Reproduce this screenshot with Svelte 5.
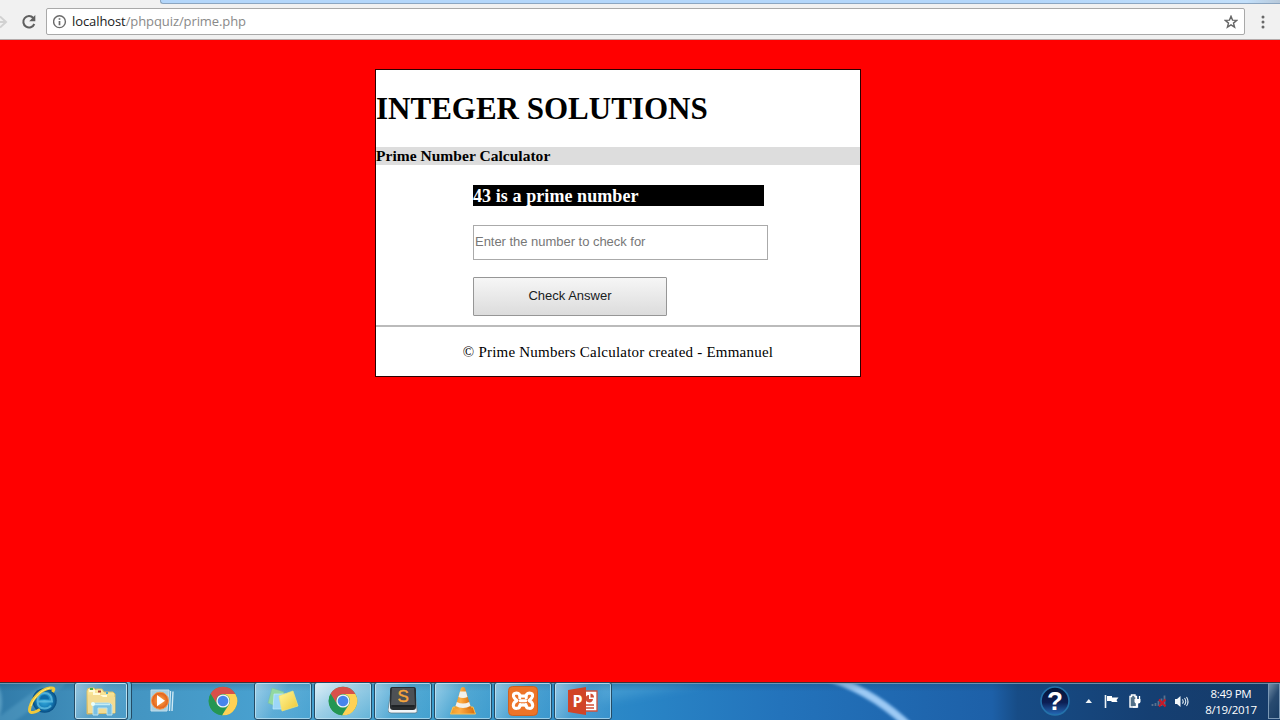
<script>
  const apps = ['ie', 'folder', 'media', 'chrome', 'notes', 'chrome', 'sublime', 'vlc', 'xampp', 'powerpoint'];
  const open = [1, 4, 5, 6, 7, 8, 9];
  let number = $state('');
</script>

<div class="screen">
  <header>
    <div class="tabs"></div>
    <div class="tools">
      <svg class="forward" width="12" height="20" viewBox="0 0 12 20"><path d="M0 10H6M1 4.500L7 10L1 15.500" fill="none" stroke="#d1d1d1" stroke-width="2" /></svg>
      <svg class="reload" width="16" height="16" viewBox="0 0 16 16">
        <path d="M12.300 4A5.700 5.700 0 1 0 13.300 10" fill="none" stroke="#5f5f5f" stroke-width="2" />
        <path d="M14.300 1V7.200H8.200Z" fill="#5f5f5f" />
      </svg>
      <div class="address">
        <svg width="14" height="14" viewBox="0 0 14 14"><circle cx="6.500" cy="6.700" r="5.900" fill="none" stroke="#6a6a6a" stroke-width="1.400" /><path d="M6.500 6V10.200M6.500 3.200V4.800" stroke="#6a6a6a" stroke-width="1.700" /></svg>
        <span class="url">localhost<i>/phpquiz/prime.php</i></span>
        <svg class="star" width="14" height="14" viewBox="0 0 14 14"><path d="M7 1.300L8.500 5.100L12.700 5.400L9.500 8.100L10.600 12.200L7 9.900L3.400 12.200L4.500 8.100L1.300 5.400L5.500 5.100Z" fill="none" stroke="#666" stroke-width="1.400" /></svg>
      </div>
      <svg class="dots" width="4" height="14" viewBox="0 0 4 14"><g fill="#686868"><circle cx="2" cy="2" r="1.500" /><circle cx="2" cy="7" r="1.500" /><circle cx="2" cy="12" r="1.500" /></g></svg>
    </div>
  </header>

  <main>
    <section class="card">
      <h1><span>INTEGER SOLUTIONS</span></h1>
      <h4><span>Prime Number Calculator</span></h4>
      <div class="form">
        <div class="result"><span>43 is a prime number</span></div>
        <input bind:value={number} placeholder="Enter the number to check for" />
        <button>Check Answer</button>
      </div>
      <footer><span>© Prime Numbers Calculator created - Emmanuel</span></footer>
    </section>
  </main>

  <nav>
    <svg class="wallpaper" width="1280" height="38" viewBox="0 0 1280 38" preserveAspectRatio="none">
      <defs>
        <linearGradient id="sky"><stop offset="0" stop-color="#317ba9" /><stop offset=".07" stop-color="#4291bd" /><stop offset=".2" stop-color="#48a0cf" /><stop offset=".35" stop-color="#399bcb" /><stop offset=".5" stop-color="#2985c6" /><stop offset=".61" stop-color="#2373bb" /><stop offset=".775" stop-color="#1d60a8" /><stop offset=".795" stop-color="#174c86" /><stop offset=".9" stop-color="#153f72" /><stop offset="1" stop-color="#163b68" /></linearGradient>
        <linearGradient id="topShade" x2="0" y2="1"><stop offset="0" stop-color="#173956" stop-opacity=".25" /><stop offset=".25" stop-color="#173956" stop-opacity="0" /></linearGradient>
        <filter id="soft" x="-20%" y="-20%" width="140%" height="140%"><feGaussianBlur stdDeviation="1.800" /></filter>
        <filter id="wide" x="-50%" y="-50%" width="200%" height="200%"><feGaussianBlur stdDeviation="5" /></filter>
      </defs>
      <rect width="1280" height="38" fill="url(#sky)" />
      <path d="M600 20L710 0H600Z" fill="#65b5df" opacity=".35" filter="url(#wide)" />
      <path d="M0 42L62 -3" stroke="#6fb5d6" stroke-width="13" opacity=".3" filter="url(#soft)" />
      <ellipse cx="-5" cy="20" rx="7" ry="18" fill="#7fbcd8" opacity=".5" filter="url(#soft)" />
      <path d="M820 -7Q870 6 911 46" fill="none" stroke="#79b9f2" stroke-width="9" opacity=".3" filter="url(#soft)" />
      <path d="M820 -7Q870 6 911 46" fill="none" stroke="#9dcaf5" stroke-width="7" filter="url(#soft)" />
      <rect width="1280" height="38" fill="url(#topShade)" />
      <rect width="1280" height="1" fill="#35343d" /><rect y="1" width="1280" height="1" fill="#86a5bd" opacity=".75" />
    </svg>

    <div class="apps">
      {#each apps as app, index}
        <div class="app" class:open={open.includes(index)} class:active={index === 5} class:stack={index === 1}>
          {#if app === 'ie'}
            <svg width="34" height="32" viewBox="0 0 34 32">
              <defs><radialGradient id="ieBlue"><stop offset="0" stop-color="#3aaede" /><stop offset=".6" stop-color="#167fbb" /><stop offset="1" stop-color="#074c82" /></radialGradient></defs>
              <circle cx="18.500" cy="15.500" r="12.200" fill="url(#ieBlue)" />
              <path d="M14 14.500Q14 10 18.500 10Q23 10 23 14.500Z" fill="#0d6aa8" />
              <path d="M12 16.500H26Q26 8 18.500 8Q11.500 8 11.500 16Q11.500 23.500 18.500 23.500Q23 23.500 25 20.500" fill="none" stroke="#62bde0" stroke-width="2" opacity=".8" />
              <path d="M26.500 7C29 3.500 28 2.500 24 3C15 4 6 14 4 22C2 29 6 29 14 24.500" fill="none" stroke="#efc83b" stroke-width="3" />
              <path d="M24 3C15 5 8 12 5 21" fill="none" stroke="#ffec7c" stroke-width="1" />
            </svg>
          {:else if app === 'folder'}
            <svg width="34" height="30" viewBox="0 0 34 30">
              <defs><linearGradient id="paper" x2="0" y2="1"><stop stop-color="#fff0a5" /><stop offset="1" stop-color="#dfb65a" /></linearGradient></defs>
              <path d="M3 28V5Q3 2 6 2H10L12 4V3H18L20 6H29L31 8V27Z" fill="url(#paper)" stroke="#d9bd67" />
              <path d="M5 5H10V8H15V10H22V12H30" fill="none" stroke="#fffbd9" stroke-width="2" />
              <path d="M6 2H9V4H6Z" fill="#46a840" /><path d="M14 4.500H17V6.500H14Z" fill="#b14b38" /><path d="M22 6H24V8H22Z" fill="#4caacf" />
              <path d="M4 9H16L19 11H31V27H4Z" fill="#f4dc92" />
              <path d="M9 29V19Q9 17 12 17H24Q27 17 28 19V29H23V22H14V29Z" fill="#7ac0e3" stroke="#b9e2ef" /><path d="M10 18.500H26" stroke="#c6edf5" stroke-width="1.500" />
              <circle cx="9" cy="18" r="2" fill="#e7ffff" />
            </svg>
          {:else if app === 'media'}
            <svg width="28" height="26" viewBox="0 0 28 26"><defs><radialGradient id="orange"><stop stop-color="#ffb14c" /><stop offset="1" stop-color="#df5b1a" /></radialGradient></defs><path d="M2 2H20L18 23H2Z" fill="#b5d9e9" opacity=".85" stroke="#dcecf2" /><path d="M21.500 3L20.500 23M24 3.500L23 23" stroke="#cfe9f5" stroke-width="1.400" /><circle cx="11" cy="12.700" r="8.500" fill="url(#orange)" stroke="#f69a49" /><path d="M8 7L16 12.700L8 18.300Z" fill="#fff" /></svg>
          {:else if app === 'chrome'}
            <svg width="30" height="30" viewBox="0 0 30 30">
              <circle cx="15" cy="15" r="14.300" fill="#35a35a" />
              <path d="M2.600 7.800A14.300 14.300 0 0 1 27.400 8H15A7 7 0 0 0 8.800 18Z" fill="#d9504a" />
              <path d="M27.400 8A14.300 14.300 0 0 1 14 29.300L21 18.500A7 7 0 0 0 15 8Z" fill="#ffd155" />
              <path d="M2.600 7.800L9 18.500A7 7 0 0 0 18 21L14 29.300A14.300 14.300 0 0 1 2.600 7.800" fill="#249653" />
              <circle cx="15" cy="15" r="6.600" fill="#f1f6f8" /><circle cx="15" cy="15" r="5.300" fill="#4785ed" />
            </svg>
          {:else if app === 'notes'}
            <svg width="34" height="28" viewBox="0 0 34 28"><defs><linearGradient id="note" x2="1" y2="1"><stop stop-color="#fff69a" /><stop offset="1" stop-color="#efc735" /></linearGradient></defs><path d="M6 1L18 5L14 21L2 16Z" fill="#93d9a1" stroke="#78bd9b" stroke-width=".5" /><path d="M8 7L20 7L19 22L7 22Z" fill="#9cd6f8" stroke="#c2ecff" stroke-width=".7" /><path d="M13 9L27 4L32 19L16 24Z" fill="url(#note)" stroke="#eee477" stroke-width=".7" /></svg>
          {:else if app === 'sublime'}
            <svg width="30" height="30" viewBox="0 0 30 30"><path d="M3 5L0 24Q0 27 3 27H27Q30 27 29 24L27 5Z" fill="#f1f5f8" stroke="#56717d" stroke-width=".7" /><path d="M4 1H26Q28 1 28 4V21Q28 24 25 24H5Q2 24 2 21V4Q2 1 4 1Z" fill="#292d30" /><path d="M4 2H26L27 19H3Z" fill="#4d5155" /><path d="M4 20H26" stroke="#1f2326" stroke-width="2" /><text x="9.500" y="16" class="s">S</text></svg>
          {:else if app === 'vlc'}
            <svg width="28" height="30" viewBox="0 0 28 30"><defs><linearGradient id="cone"><stop stop-color="#eb9a25" /><stop offset=".35" stop-color="#ffad45" /><stop offset="1" stop-color="#d66b0a" /></linearGradient></defs><path d="M4 21H24L26.500 28H1.500Z" fill="url(#cone)" stroke="#f7c154" /><path d="M12 2Q14 0 16 2L22 22Q14 27 6 22Z" fill="url(#cone)" /><path d="M11 5.500H17L18.500 11Q14 13 9.500 11ZM7.800 16L6.500 20Q14 24 21.500 20L20.200 16Q14 19 7.800 16Z" fill="#f2f1ec" /></svg>
          {:else if app === 'xampp'}
            <svg width="30" height="30" viewBox="0 0 30 30"><rect x=".5" y=".5" width="29" height="29" rx="4" fill="#ed7428" stroke="#cf6222" /><path d="M11.800 11.800Q12.200 7 8.500 7Q4.900 7.100 5.500 10.400Q6 12.600 9 14.500Q5.300 16.300 5.300 19.500Q5.500 22.600 8.900 22.300Q12.500 22 12.100 18.500M18.200 11.800Q17.800 7 21.500 7Q25.100 7.100 24.500 10.400Q24 12.600 21 14.500Q24.700 16.300 24.700 19.500Q24.500 22.600 21.100 22.300Q17.500 22 17.900 18.500M11.500 9Q15 11.200 18.500 9M11.500 20Q15 17.800 18.500 20M12.400 14.700H17.600" fill="none" stroke="#fff" stroke-width="3.100" stroke-linecap="round" stroke-linejoin="round" /></svg>
          {:else}
            <svg width="30" height="30" viewBox="0 0 30 30"><path d="M14 5H29V25H14Z" fill="#fff" stroke="#d0523c" stroke-width="1.300" /><path d="M21 9A3.700 3.700 0 1 0 25 13H21Z" fill="#d24f36" /><path d="M22.500 7.500V11.500H26A4 4 0 0 0 22.500 7.500Z" fill="#d24f36" /><path d="M18 19H26M18 22H26" stroke="#d24f36" stroke-width="1.500" /><path d="M0 4L18 1V29L0 26Z" fill="#d14427" /><text x="4.500" y="20.500" class="p">P</text></svg>
          {/if}
        </div>
      {/each}
    </div>

    <div class="tray">
      <svg width="32" height="32" viewBox="0 0 32 32"><defs><linearGradient id="help" x2="0" y2="1"><stop stop-color="#041638" /><stop offset=".55" stop-color="#0c1e54" /><stop offset="1" stop-color="#246bb9" /></linearGradient></defs><circle cx="16" cy="16" r="14" fill="url(#help)" stroke="#2472aa" stroke-width="1.600" /><text x="8" y="25" class="question">?</text></svg>
      <svg class="arrow" width="8" height="6" viewBox="0 0 8 6"><path d="M.500 5H7L3.800 1Z" fill="#eef4f7" /></svg>
      <svg class="flag" width="16" height="16" viewBox="0 0 16 16"><path d="M1.500 2V15" stroke="#edf3f7" stroke-width="1.600" /><path d="M3 3H8V4.500H14.500L12.500 7L13.500 9H7.500V8H3Z" fill="#fff" /></svg>
      <svg class="power" width="15" height="16" viewBox="0 0 15 16"><path d="M3.500 3.500V2H7V3.500H8.500V14H2V3.500Z" fill="#527088" stroke="#fff" stroke-width="1.400" /><path d="M6.500 6V8.500Q6.500 10.500 8.500 10.500H10.500Q12.500 10.500 12.500 8.500V6Z" fill="#fff" /><path d="M8 6V3M11.500 6V3M9.500 9.500V14H5" fill="none" stroke="#fff" stroke-width="1.300" /></svg>
      <svg class="signal" width="17" height="16" viewBox="0 0 17 16"><path d="M1.500 13V11M4.500 13V10M7.500 13V8M10.500 13V5.500M13.500 13V2.500" stroke="#59718d" stroke-width="1.800" /><path d="M8 6.500L14.500 13.500M14.500 6.500L8 13.500" stroke="#c91928" stroke-width="2" /></svg>
      <svg class="sound" width="16" height="16" viewBox="0 0 16 16"><path d="M0 6H2L5.500 3V14L2 11H0Z" fill="#f2f6f9" /><path d="M7.500 6.300Q9 8.500 7.500 10.700M9.500 5Q12 8.500 9.500 12M11.500 4Q14.500 8.500 11.500 13" fill="none" stroke="#dce7ef" stroke-width="1.100" /></svg>
      <div class="clock"><span>8:49 PM</span><span>8/19/2017</span></div>
      <div class="desktop"></div>
    </div>
  </nav>
</div>

<style>
  :global(body) { margin: 0; overflow: hidden; }
  .screen { width: 1280px; height: 720px; display: flex; flex-direction: column; background: #f00; overflow: hidden; }
  header { height: 40px; box-sizing: border-box; background: #f1f1f1; border-bottom: 1px solid #b4aaaa; display: flex; flex-direction: column; }
  .tabs { height: 4px; box-sizing: border-box; margin-left: 160px; background: linear-gradient(90deg, #b3d6fa 0 78%, #c2dffa 97%, #b8c9da); border-bottom: 1px solid #8ba5c0; border-left: 1px solid #8ba5c0; border-bottom-left-radius: 3px; }
  .tools { flex: 1; display: flex; align-items: center; }
  .forward { flex: none; width: 12px; margin-left: -1px; }
  .reload { margin-left: 10px; flex: none; }
  .address { height: 27px; width: 1199px; box-sizing: border-box; margin-left: 9px; border: 1px solid #a9a9a9; border-radius: 2px; background: #fff; display: flex; align-items: center; padding: 0 6px; flex: none; }
  .url { font: 13px/18px "Open Sans", sans-serif; margin: -1px 0 0 5px; color: #202020; letter-spacing: -.09px; }
  .url i { font-style: normal; color: #898989; }
  .star { margin-left: auto; }
  .dots { margin-left: 16px; }
  main { height: 642px; display: flex; align-items: flex-start; }
  .card { width: 486px; height: 308px; margin: 29px 0 0 375px; box-sizing: border-box; border: 1px solid #2b0000; background: #fff; display: flex; flex-direction: column; font-family: "Liberation Serif", serif; color: #000; }
  h1 { margin: 20px 0 0; font-size: 31px; line-height: 37px; height: 36px; font-weight: bold; white-space: nowrap; }
  h4 { margin: 21px 0 0; height: 18px; background: #ddd; font-size: 15.500px; line-height: 18px; letter-spacing: .03px; }
  .form { height: 160px; margin-left: 97px; display: flex; flex-direction: column; }
  .result { width: 291px; height: 21px; margin-top: 20px; background: #000; color: #fff; font-size: 18px; line-height: 22px; font-weight: bold; letter-spacing: .08px; }
  input { width: 295px; height: 35px; box-sizing: border-box; margin: 19px 0 0; padding: 0 1px 2px; border: 1px solid #aaa; border-radius: 0; background: white; font: 13px "Liberation Sans", sans-serif; letter-spacing: -.03px; }
  input::placeholder { color: #777; opacity: 1; }
  button { width: 194px; height: 39px; margin: 17px 0 0; padding: 0 0 2px; border: 1px solid #969696; border-radius: 1px; background: linear-gradient(#f6f6f6, #dcdcdc); font: 13px "Liberation Sans", sans-serif; color: #18201c; }
  footer { border-top: 2px solid #bbb; text-align: center; font-size: 15px; line-height: 17px; letter-spacing: .22px; padding-top: 17px; }
  nav { height: 38px; position: relative; display: flex; justify-content: space-between; align-items: stretch; overflow: hidden; }
  .wallpaper { position: absolute; inset: 0; }
  .apps { position: relative; padding-left: 14px; display: flex; gap: 2px; }
  .app { width: 58px; height: 38px; box-sizing: border-box; display: flex; align-items: center; justify-content: center; border: 1px solid transparent; }
  .app svg { display: block; }
  .open { border-color: #244b65; border-radius: 3px; background: linear-gradient(120deg, rgba(226,246,255,.55), rgba(171,219,242,.22) 46%, rgba(102,183,225,.2)); box-shadow: inset 0 0 0 1px rgba(206,235,248,.65); }
  .active { background: linear-gradient(145deg, rgba(247,253,255,.86), rgba(204,232,243,.65) 45%, rgba(130,199,226,.55)); }
  .stack { width: 54px; margin-right: 4px; box-shadow: inset 0 0 0 1px #bce1f0, 3px 0 0 #69b1d1, 4px 0 0 #244b65; }
  .s { font: 17px "Liberation Sans", sans-serif; fill: #f5a53c; stroke: #f5a53c; stroke-width: .4px; }
  .p { font: bold 16px "Open Sans", sans-serif; fill: #fff; }
  .tray { position: relative; width: 241px; display: flex; align-items: center; }
  .tray svg { flex: none; }
  .question { font: bold 26px "Liberation Sans", sans-serif; fill: #fff; }
  .arrow { margin-left: 14px; }
  .flag { margin-left: 11px; }
  .power { margin-left: 8px; }
  .signal { margin-left: 8px; }
  .sound { margin-left: 7px; }
  .clock { width: 60px; margin-left: 10px; display: flex; flex-direction: column; align-items: center; font: 11.5px/16px "Open Sans", sans-serif; color: #fff; letter-spacing: -.32px; white-space: nowrap; padding-top: 1px; }
  .desktop { width: 12px; height: 36px; margin-left: auto; box-sizing: border-box; border: 1px solid #7b98b5; background: linear-gradient(120deg, #738da6, #294b70 45%, #183c64); }
</style>
